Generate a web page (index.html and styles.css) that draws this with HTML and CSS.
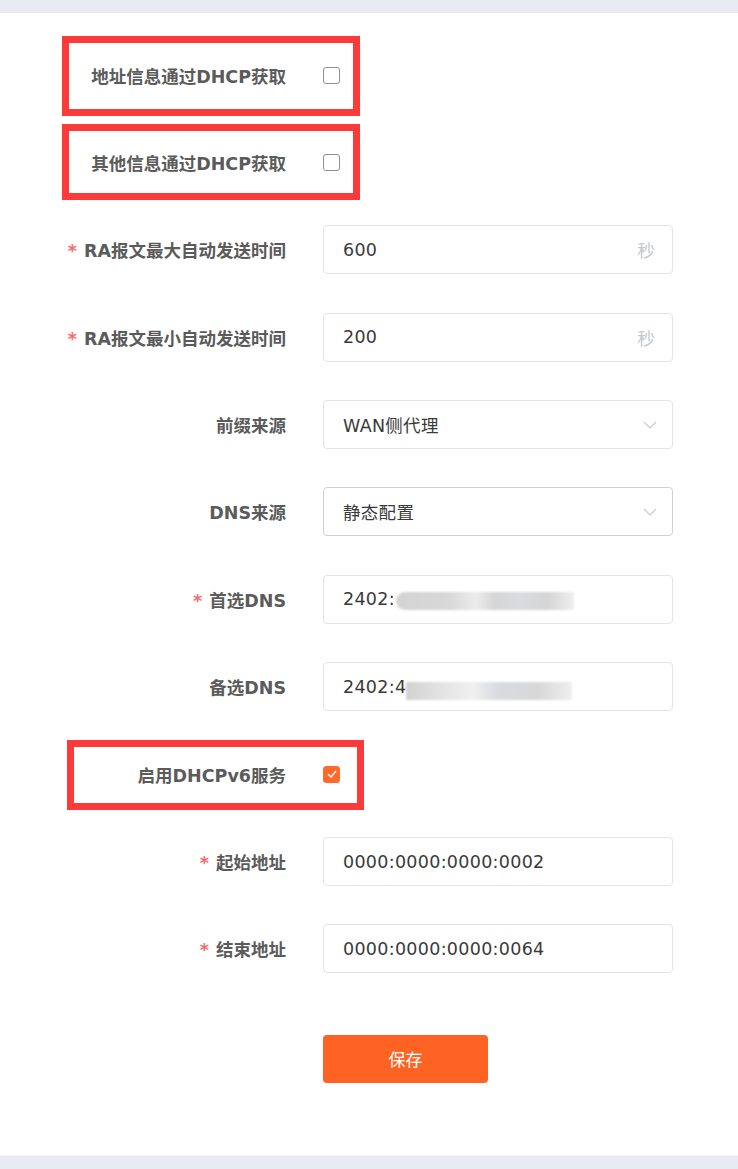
FILE: index.html
```html
<!DOCTYPE html>
<html lang="zh-CN">
<head>
    <meta charset="UTF-8">
    <meta name="viewport" content="width=device-width, initial-scale=1.0">
    <title>DHCPv6 设置</title>
    <link rel="stylesheet" href="styles.css">
</head>
<body>
    <div class="page">
        <form class="form">
            <div class="form-item marked mark-1">
                <label class="form-label">地址信息通过DHCP获取</label>
                <div class="form-control">
                    <span class="checkbox"></span>
                </div>
            </div>

            <div class="form-item marked mark-2">
                <label class="form-label">其他信息通过DHCP获取</label>
                <div class="form-control">
                    <span class="checkbox"></span>
                </div>
            </div>

            <div class="form-item">
                <label class="form-label required">RA报文最大自动发送时间</label>
                <div class="form-control">
                    <div class="input">
                        <span class="input-value">600</span>
                        <span class="input-suffix">秒</span>
                    </div>
                </div>
            </div>

            <div class="form-item">
                <label class="form-label required">RA报文最小自动发送时间</label>
                <div class="form-control">
                    <div class="input">
                        <span class="input-value">200</span>
                        <span class="input-suffix">秒</span>
                    </div>
                </div>
            </div>

            <div class="form-item">
                <label class="form-label">前缀来源</label>
                <div class="form-control">
                    <div class="input select">
                        <span class="input-value">WAN侧代理</span>
                        <svg class="arrow" width="14" height="8" viewBox="0 0 14 8"><path d="M1 1l6 6 6-6" fill="none" stroke="#c6ccd4" stroke-width="1.2"/></svg>
                    </div>
                </div>
            </div>

            <div class="form-item">
                <label class="form-label">DNS来源</label>
                <div class="form-control">
                    <div class="input select is-hover">
                        <span class="input-value">静态配置</span>
                        <svg class="arrow" width="14" height="8" viewBox="0 0 14 8"><path d="M1 1l6 6 6-6" fill="none" stroke="#c6ccd4" stroke-width="1.2"/></svg>
                    </div>
                </div>
            </div>

            <div class="form-item">
                <label class="form-label required">首选DNS</label>
                <div class="form-control">
                    <div class="input">
                        <span class="input-value">2402:</span>
                        <span class="blurred blur-1"></span>
                    </div>
                </div>
            </div>

            <div class="form-item">
                <label class="form-label">备选DNS</label>
                <div class="form-control">
                    <div class="input">
                        <span class="input-value">2402:4</span>
                        <span class="blurred blur-2"></span>
                    </div>
                </div>
            </div>

            <div class="form-item marked mark-3">
                <label class="form-label">启用DHCPv6服务</label>
                <div class="form-control">
                    <span class="checkbox checked">
                        <svg width="10" height="8" viewBox="0 0 10 8"><path d="M1 4l3 3 5-6" fill="none" stroke="#fff" stroke-width="1.4"/></svg>
                    </span>
                </div>
            </div>

            <div class="form-item">
                <label class="form-label required">起始地址</label>
                <div class="form-control">
                    <div class="input">
                        <span class="input-value">0000:0000:0000:0002</span>
                    </div>
                </div>
            </div>

            <div class="form-item">
                <label class="form-label required">结束地址</label>
                <div class="form-control">
                    <div class="input">
                        <span class="input-value">0000:0000:0000:0064</span>
                    </div>
                </div>
            </div>

            <div class="form-actions">
                <button type="button" class="btn-save">保存</button>
            </div>
        </form>
    </div>
</body>
</html>
```

FILE: styles.css
```css
body {
    margin: 0;
    background-color: #e8ebf3;
    font-family: "DejaVu Sans", "Noto Sans CJK SC", sans-serif;
}

.page {
    background: white;
    margin-top: 13px;
    height: 1143px;
    border-bottom: 1px solid #f3f4f8;
    box-sizing: border-box;
    overflow: hidden;
}

.form {
    padding-top: 37.5px;
}

.form-item {
    position: relative;
    display: flex;
    align-items: center;
    height: 49px;
    margin-bottom: 38.4px;
}

.form-label {
    width: 286px;
    text-align: right;
    font-size: 17.5px;
    font-weight: bold;
    color: #5b5b5b;
    flex-shrink: 0;
}

.form-label.required::before {
    content: "*";
    color: #f56c6c;
    margin-right: 7px;
}

.form-control {
    margin-left: 37px;
    display: flex;
    align-items: center;
}

/* 标注框 */
.marked::before {
    content: "";
    position: absolute;
    border: 7px solid #fc3a3a;
    box-sizing: border-box;
    pointer-events: none;
}

.mark-1::before {
    left: 62px;
    top: -14.5px;
    width: 298px;
    height: 80px;
}

.mark-2::before {
    left: 62px;
    top: -13.5px;
    width: 298px;
    height: 76px;
}

.mark-3::before {
    left: 67px;
    top: -9.5px;
    width: 297px;
    height: 70px;
}

.checkbox {
    width: 17px;
    height: 17px;
    border: 1px solid #8f8f8f;
    border-radius: 3px;
    box-sizing: border-box;
    display: flex;
    align-items: center;
    justify-content: center;
    background: white;
}

.checkbox.checked {
    background: #ff6a2c;
    border-color: #ff6a2c;
}

.input {
    width: 350px;
    height: 49px;
    border: 1px solid #e4e4e6;
    border-radius: 4px;
    box-sizing: border-box;
    padding: 0 17px 0 19px;
    display: flex;
    align-items: center;
    font-size: 17.5px;
    letter-spacing: 0.3px;
    color: #3a3a3a;
    background: white;
}

.input.is-hover {
    border-color: #cfd0d6;
}

.input-value {
    flex-shrink: 0;
}

.input-suffix {
    margin-left: auto;
    color: #c4c7cc;
}

.select .arrow {
    margin-left: auto;
    margin-right: -2px;
}

/* 打码区域 */
.blurred {
    height: 18px;
    background: linear-gradient(90deg, #d4d4d4 0%, #d8d8d8 30%, #ececec 45%, #d6d6d6 55%, #d9dbde 70%, #d5d5d5 85%, #efefef 100%);
    filter: blur(1px);
    margin-top: 4px;
}

.blur-1 {
    width: 178px;
    margin-left: 1px;
    border-radius: 9px 0 0 9px;
}

.blur-2 {
    width: 166px;
    margin-top: 8px;
    background: linear-gradient(90deg, #d2d2d2 0%, #e2e2e2 20%, #f0f0f0 40%, #d9dbe0 55%, #d8d8d8 80%, #efefef 100%);
}

.form-actions {
    padding-left: 323px;
    padding-top: 23px;
}

.btn-save {
    width: 165px;
    height: 48px;
    border: none;
    border-radius: 4px;
    background: #ff6324;
    color: white;
    font-size: 17px;
    font-family: "Noto Sans CJK SC", sans-serif;
    cursor: pointer;
}
```
